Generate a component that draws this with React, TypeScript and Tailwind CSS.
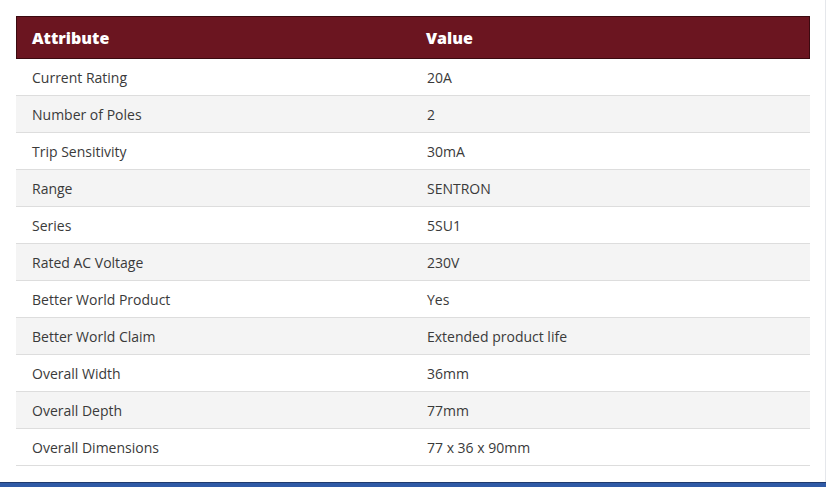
import React from 'react';

const rows: [string, string][] = [
  ['Current Rating', '20A'],
  ['Number of Poles', '2'],
  ['Trip Sensitivity', '30mA'],
  ['Range', 'SENTRON'],
  ['Series', '5SU1'],
  ['Rated AC Voltage', '230V'],
  ['Better World Product', 'Yes'],
  ['Better World Claim', 'Extended product life'],
  ['Overall Width', '36mm'],
  ['Overall Depth', '77mm'],
  ['Overall Dimensions', '77 x 36 x 90mm'],
];

export default function App() {
  return (
    <div className="w-[827px] h-[487px] flex flex-col bg-white font-['Open_Sans',sans-serif] overflow-hidden">
      <div className="flex-1 w-[826px] border-r border-gray-200 pt-4 px-4">
        <div className="w-[794px]">
          {/* header */}
          <div className="h-[43px] grid grid-cols-2 bg-[#6b1520] border border-[#3b0a10] text-white text-[16px] font-extrabold items-center">
            <div className="pl-[15px]">Attribute</div>
            <div className="pl-[13px]">Value</div>
          </div>
          {rows.map(([attr, val], i) => (
            <div
              key={attr}
              className={`h-[37px] grid grid-cols-2 items-center border-b border-[#dddddd] text-[14px] text-[#3a3a3a] ${
                i % 2 === 1 ? 'bg-[#f4f4f4]' : 'bg-white'
              }`}
            >
              <div className="pl-4">{attr}</div>
              <div className="pl-[14px]">{val}</div>
            </div>
          ))}
        </div>
      </div>
      <div className="h-[5px] w-[826px] bg-[#2f5aa6] border-t border-[#1f3a6e]" />
    </div>
  );
}
